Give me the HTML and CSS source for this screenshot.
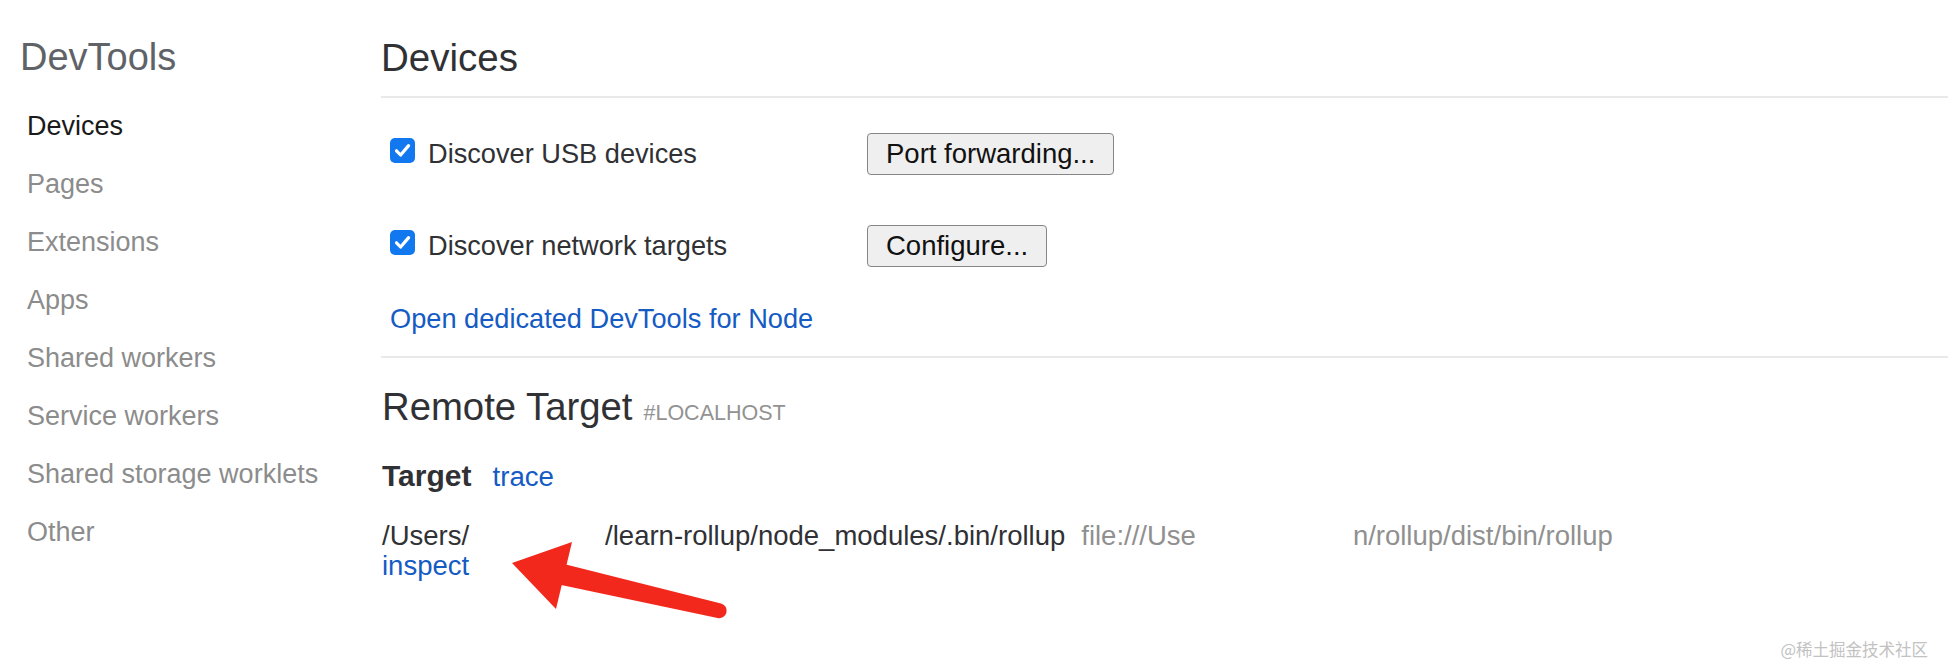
FILE: index.html
```html
<!DOCTYPE html>
<html lang="en">
<head>
<meta charset="utf-8">
<title>DevTools - Devices</title>
<link rel="stylesheet" href="styles.css">
</head>
<body>
<div class="page">
  <nav class="sidebar">
    <h1 class="brand">DevTools</h1>
    <ul class="nav">
      <li class="nav-item active">Devices</li>
      <li class="nav-item">Pages</li>
      <li class="nav-item">Extensions</li>
      <li class="nav-item">Apps</li>
      <li class="nav-item">Shared workers</li>
      <li class="nav-item">Service workers</li>
      <li class="nav-item">Shared storage worklets</li>
      <li class="nav-item">Other</li>
    </ul>
  </nav>
  <main class="main">
    <h2 class="title">Devices</h2>
    <div class="settings">
      <div class="setting-row">
        <label class="check">
          <span class="box"><svg viewBox="0 0 25 25" width="25" height="25"><path d="M6.5 12.8 L10.6 17 L18.6 7.6" fill="none" stroke="#fff" stroke-width="3.2" stroke-linecap="round" stroke-linejoin="round"/></svg></span>
          <span class="check-label">Discover USB devices</span>
        </label>
        <button class="btn">Port forwarding...</button>
      </div>
      <div class="setting-row second">
        <label class="check">
          <span class="box"><svg viewBox="0 0 25 25" width="25" height="25"><path d="M6.5 12.8 L10.6 17 L18.6 7.6" fill="none" stroke="#fff" stroke-width="3.2" stroke-linecap="round" stroke-linejoin="round"/></svg></span>
          <span class="check-label">Discover network targets</span>
        </label>
        <button class="btn">Configure...</button>
      </div>
      <a class="link node-link" href="#">Open dedicated DevTools for Node</a>
    </div>
    <section class="remote">
      <div class="remote-head">
        <h3 class="remote-title">Remote Target</h3>
        <span class="host">#LOCALHOST</span>
      </div>
      <div class="target-head">
        <strong class="target-label">Target</strong>
        <a class="link" href="#">trace</a>
      </div>
      <div class="target">
        <div class="target-line"><span class="path">/Users/</span><span class="redacted r1"></span><span class="path">/learn-rollup/node_modules/.bin/rollup</span><span class="url url-start">file:///Use</span><span class="redacted r2"></span><span class="url">n/rollup/dist/bin/rollup</span></div>
        <a class="link inspect" href="#">inspect</a>
      </div>
    </section>
  </main>
  <svg class="arrow" viewBox="0 0 240 95" width="240" height="95">
    <path d="M12 33 L72 12 L56 79 Z" fill="#f3281c"/>
    <path d="M52 31 L221 73.5 A7 7 0 0 1 217.5 88 L47 52 Z" fill="#f3281c"/>
  </svg>
  <div class="watermark">@稀土掘金技术社区</div>
</div>
</body>
</html>
```

FILE: styles.css
```css
html, body {
  margin: 0;
  padding: 0;
  background: #fff;
}

.page {
  position: relative;
  display: flex;
  width: 1948px;
  height: 666px;
  overflow: hidden;
  font-family: "Liberation Sans", Arial, sans-serif;
  color: #303134;
}

.sidebar {
  flex: none;
  width: 381px;
}

.brand {
  margin: 35px 0 0 20px;
  font-size: 38px;
  line-height: 44px;
  font-weight: 400;
  color: #5f6368;
}

.nav {
  list-style: none;
  margin: 18px 0 0;
  padding: 0 0 0 27px;
}

.nav-item {
  font-size: 27px;
  line-height: 58px;
  color: #8c8c8c;
}

.nav-item.active {
  color: #1a1a1a;
}

.main {
  flex: 1;
  min-width: 0;
}

.title {
  margin: 35px 0 0;
  padding-bottom: 15px;
  font-size: 38.5px;
  line-height: 46px;
  font-weight: 400;
  color: #303134;
  border-bottom: 2px solid #e9e9e9;
}

.settings {
  padding: 35px 0 21px 9px;
  border-bottom: 2px solid #e9e9e9;
}

.setting-row {
  display: grid;
  grid-template-columns: 477px auto;
  justify-items: start;
  align-items: center;
  height: 42px;
}

.setting-row.second {
  margin-top: 50px;
}

.check {
  display: flex;
  align-items: center;
  gap: 13px;
}

.box {
  display: block;
  width: 25px;
  height: 25px;
  margin-bottom: 7px;
  border-radius: 5px;
  background: #1278f0;
}

.box svg {
  display: block;
}

.check-label {
  font-size: 27.2px;
  line-height: 30px;
  color: #303134;
}

.btn {
  height: 42px;
  padding: 0 18px;
  font-family: "Liberation Sans", Arial, sans-serif;
  font-size: 27.5px;
  line-height: 38px;
  color: #111;
  background: #efefef;
  border: 1.5px solid #868686;
  border-radius: 4px;
}

.link {
  color: #155bc4;
  text-decoration: none;
}

.node-link {
  display: block;
  margin-top: 36px;
  font-size: 27.2px;
  line-height: 32px;
}

.remote {
  padding: 27px 0 0 1px;
}

.remote-head {
  display: flex;
  align-items: baseline;
}

.remote-title {
  margin: 0;
  font-size: 38.3px;
  line-height: 44px;
  font-weight: 400;
  color: #303134;
}

.host {
  margin-left: 11px;
  font-size: 21.5px;
  color: #929292;
}

.target-head {
  display: flex;
  align-items: baseline;
  gap: 21px;
  margin-top: 30px;
  line-height: 34px;
}

.target-label {
  font-size: 30px;
  font-weight: 700;
  color: #303134;
}

.target-head .link {
  font-size: 27.7px;
}

.target {
  margin-top: 27px;
  font-size: 27.5px;
  line-height: 30px;
}

.target-line {
  display: flex;
  white-space: nowrap;
}

.path {
  color: #303134;
}

.redacted {
  display: inline-block;
}

.r1 {
  width: 136px;
}

.r2 {
  width: 157px;
}

.url {
  color: #909090;
}

.url-start {
  margin-left: 16px;
}

.inspect {
  display: block;
}

.arrow {
  position: absolute;
  left: 500px;
  top: 530px;
}

.watermark {
  position: absolute;
  right: 20px;
  bottom: 7px;
  font-family: "Noto Sans CJK SC", sans-serif;
  font-size: 16.5px;
  line-height: 20px;
  color: #c2c2c2;
}
```
